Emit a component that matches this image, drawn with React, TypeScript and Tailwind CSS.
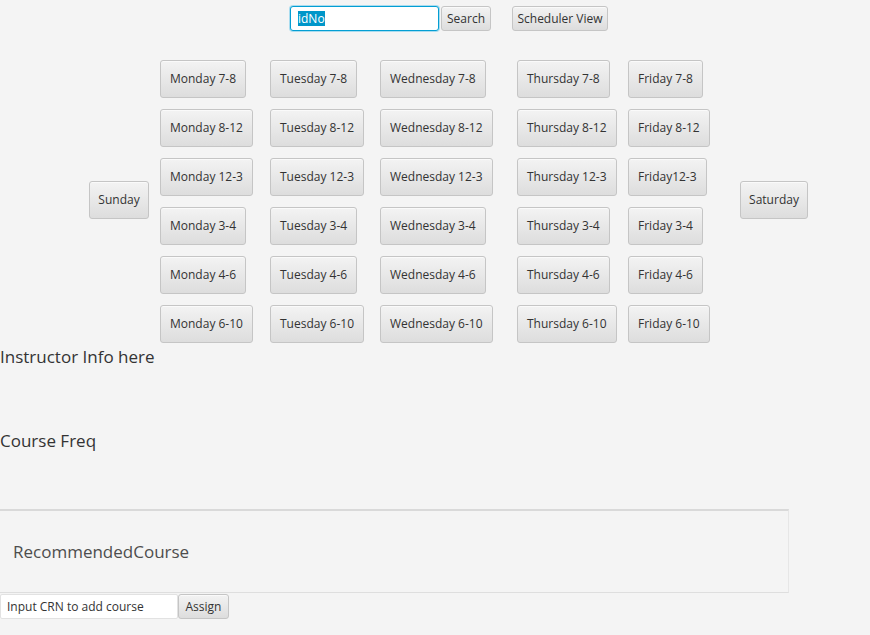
import React from 'react';

const btn =
  'h-[38px] px-[9px] flex items-center justify-center whitespace-nowrap rounded-[3px] border border-[#c5c5c5] bg-gradient-to-b from-[#f3f3f3] to-[#dddddd] text-[12px] text-[#333333] shadow-[inset_0_1px_0_#fafafa]';

const smallBtn =
  'h-[25px] px-[8px] flex items-center justify-center whitespace-nowrap rounded-[3px] border border-[#c5c5c5] bg-gradient-to-b from-[#f3f3f3] to-[#dddddd] text-[12px] text-[#333333] shadow-[inset_0_1px_0_#fafafa]';

const columns = [
  { w: 'w-[110px]', items: ['Monday 7-8', 'Monday 8-12', 'Monday 12-3', 'Monday 3-4', 'Monday 4-6', 'Monday 6-10'] },
  { w: 'w-[110px]', items: ['Tuesday 7-8', 'Tuesday 8-12', 'Tuesday 12-3', 'Tuesday 3-4', 'Tuesday 4-6', 'Tuesday 6-10'] },
  { w: 'w-[137px]', items: ['Wednesday 7-8', 'Wednesday 8-12', 'Wednesday 12-3', 'Wednesday 3-4', 'Wednesday 4-6', 'Wednesday 6-10'] },
  { w: 'w-[111px]', items: ['Thursday 7-8', 'Thursday 8-12', 'Thursday 12-3', 'Thursday 3-4', 'Thursday 4-6', 'Thursday 6-10'] },
  { w: 'w-[112px]', items: ['Friday 7-8', 'Friday 8-12', 'Friday12-3', 'Friday 3-4', 'Friday 4-6', 'Friday 6-10'] },
];

const App: React.FC = () => {
  return (
    <div className="w-[870px] h-[635px] overflow-hidden bg-[#f4f4f4] font-['Open_Sans',sans-serif] text-[#333333]">
      {/* top search bar */}
      <div className="flex items-center pt-[6px] pl-[290px]">
        <div className="w-[149px] h-[25px] rounded-[3px] border border-[#039ed3] bg-white shadow-[0_0_0_1px_#a9dcef] flex items-center px-[7px] text-[12px]">
          <span className="bg-[#0096c9] text-white leading-[15px]">idNo</span>
        </div>
        <button className={smallBtn + ' ml-[2px] w-[50px]'}>Search</button>
        <button className={smallBtn + ' ml-[21px] w-[96px]'}>Scheduler View</button>
      </div>

      {/* schedule grid */}
      <div className="flex items-center pl-[89px] mt-[29px]">
        <div className="w-[71px] pb-[4px]">
          <button className={btn + ' w-[60px]'}>Sunday</button>
        </div>
        {columns.map((col) => (
          <div key={col.items[0]} className={col.w + ' flex flex-col items-start gap-[11px]'}>
            {col.items.map((label) => (
              <button key={label} className={btn}>
                {label}
              </button>
            ))}
          </div>
        ))}
        <div className="pb-[4px]">
          <button className={btn + ' w-[68px]'}>Saturday</button>
        </div>
      </div>

      <div className="mt-[2px] text-[17px] leading-[23px] text-[#333333]">Instructor Info here</div>
      <div className="mt-[61px] text-[17px] leading-[23px] text-[#333333]">Course Freq</div>

      {/* recommended course */}
      <div className="mt-[57px] w-[789px] h-[84px] border-t-2 border-t-[#d9d9d9] border-r border-r-[#e6e6e6] border-b border-b-[#dedede] flex items-center pl-[13px]">
        <span className="text-[17px] text-[#4d4d4d]">RecommendedCourse</span>
      </div>

      {/* add course */}
      <div className="flex items-center mt-[1px]">
        <div className="w-[178px] h-[25px] bg-white border border-[#e2e2e2] rounded-[2px] flex items-center px-[6px] text-[12px] text-[#333333] whitespace-nowrap">
          Input CRN to add course
        </div>
        <button className={smallBtn + ' w-[51px]'}>Assign</button>
      </div>
    </div>
  );
};

export default App;
